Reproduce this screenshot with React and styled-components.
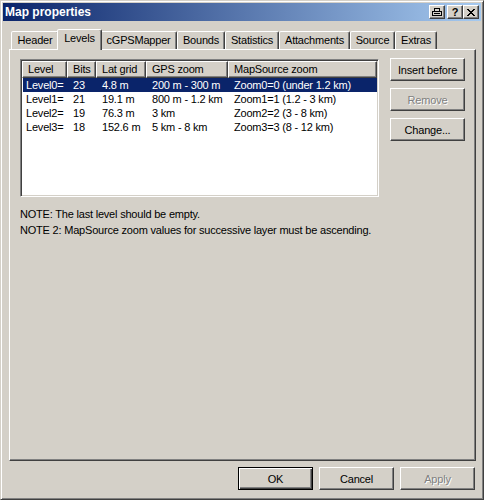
import React from "react";
import styled, { createGlobalStyle, css } from "styled-components";

const GlobalStyle = createGlobalStyle`
  html, body {
    margin: 0;
    padding: 0;
    background: #d4d0c8;
  }
  * {
    box-sizing: border-box;
  }
`;

const raised = css`
  border: 1px solid;
  border-color: #ffffff #404040 #404040 #ffffff;
  box-shadow: inset -1px -1px #808080;
`;

const Window = styled.div`
  width: 484px;
  height: 500px;
  background: #d4d0c8;
  border: 1px solid;
  border-color: #d4d0c8 #404040 #404040 #d4d0c8;
  box-shadow: inset 1px 1px #ffffff, inset -1px -1px #808080;
  padding: 2px;
  display: flex;
  flex-direction: column;
  font-family: "Liberation Sans", Arial, sans-serif;
  font-size: 11px;
  letter-spacing: -0.2px;
  color: #000;
`;

const TitleBar = styled.div`
  height: 18px;
  flex: none;
  display: flex;
  align-items: center;
  padding: 0 2px;
  background: linear-gradient(to right, #0a246a, #a6caf0);
`;

const Title = styled.div`
  flex: 1;
  color: #fff;
  font-weight: bold;
  font-size: 12px;
  letter-spacing: 0;
  white-space: nowrap;
`;

const CaptionButtons = styled.div`
  display: flex;
  gap: 2px;
`;

const CaptionGroup = styled.div`
  display: flex;
`;

const CaptionButton = styled.div`
  width: 16px;
  height: 14px;
  background: #d4d0c8;
  ${raised};
  display: flex;
  align-items: center;
  justify-content: center;
  font-weight: bold;
  font-size: 11px;
  line-height: 12px;
  letter-spacing: 0;
`;

const Body = styled.div`
  flex: 1;
  display: flex;
  flex-direction: column;
  padding: 8px 5px 7px 6px;
`;

const TabStrip = styled.div`
  height: 20px;
  display: flex;
  align-items: flex-end;
  padding-left: 2px;
  position: relative;
  z-index: 2;
`;

const Tab = styled.div`
  width: ${(p) => p.$w}px;
  height: 18px;
  flex: none;
  border: 1px solid;
  border-bottom: none;
  border-color: #ffffff #404040 transparent #ffffff;
  border-radius: 2px 2px 0 0;
  box-shadow: inset -1px 0 #808080;
  background: #d4d0c8;
  text-align: center;
  padding-top: 2px;
  line-height: 13px;
  white-space: nowrap;
  ${(p) =>
    p.$active &&
    css`
      height: 21px;
      margin: 0 -2px -1px;
      width: ${p.$w + 4}px;
      position: relative;
      z-index: 3;
    `}
`;

const Panel = styled.div`
  flex: 1;
  ${raised};
  padding: 8px 10px 0 10px;
  display: flex;
  flex-direction: column;
`;

const TopRow = styled.div`
  display: flex;
  gap: 11px;
  align-items: flex-start;
`;

const ListView = styled.div`
  width: 359px;
  height: 138px;
  margin-top: 1px;
  background: #fff;
  border: 1px solid;
  border-color: #808080 #ffffff #ffffff #808080;
  box-shadow: inset 1px 1px #404040, inset -1px -1px #d4d0c8;
  padding: 1px;
  display: flex;
  flex-direction: column;
`;

const cols = "45px 29px 50px 82px 149px";

const HeaderRow = styled.div`
  display: grid;
  grid-template-columns: ${cols};
  height: 17px;
  flex: none;
`;

const HeaderCell = styled.div`
  background: #d4d0c8;
  ${raised};
  padding-left: 5px;
  line-height: 15px;
  white-space: nowrap;
  overflow: hidden;
`;

const Row = styled.div`
  display: grid;
  grid-template-columns: ${cols};
  height: 14px;
  line-height: 14px;
  ${(p) =>
    p.$selected &&
    css`
      background: #0a246a;
      color: #fff;
      box-shadow: inset 1px 0 #fff;
    `}
`;

const Cell = styled.div`
  padding-left: ${(p) => (p.$first ? 4 : 6)}px;
  white-space: nowrap;
  overflow: hidden;
`;

const ButtonColumn = styled.div`
  display: flex;
  flex-direction: column;
  gap: 7px;
`;

const Button = styled.div`
  width: 75px;
  height: 23px;
  background: #d4d0c8;
  display: flex;
  align-items: center;
  justify-content: center;
  white-space: nowrap;
  ${(p) =>
    p.$default
      ? css`
          border: 1px solid #000;
          box-shadow: inset 1px 1px #fff, inset -1px -1px #404040,
            inset -2px -2px #808080;
        `
      : raised}
  ${(p) =>
    p.$disabled &&
    css`
      color: #808080;
      text-shadow: 1px 1px #fff;
    `}
`;

const Notes = styled.div`
  margin-top: 9px;
  line-height: 16px;
`;

const ButtonRow = styled.div`
  display: flex;
  justify-content: flex-end;
  gap: 6px;
  margin-top: 6px;
  padding-right: 1px;
`;

const PrintIcon = () => (
  <svg width="10" height="8" viewBox="0 0 10 8" shapeRendering="crispEdges">
    <path d="M2 0h6v1H2zM2 0h1v3H2zM7 0h1v3H7z" fill="#000" />
    <path d="M0 3h10v1H0zM0 3h1v5H0zM9 3h1v5H9zM0 7h10v1H0zM2 5h6v1H2z" fill="#000" />
  </svg>
);

const CloseIcon = () => (
  <svg width="8" height="7" viewBox="0 0 8 7" shapeRendering="crispEdges">
    <path
      d="M0 0h2v1H0zM6 0h2v1H6zM1 1h2v1H1zM5 1h2v1H5zM2 2h4v1H2zM3 3h2v1H3zM2 4h4v1H2zM1 5h2v1H1zM5 5h2v1H5zM0 6h2v1H0zM6 6h2v1H6z"
      fill="#000"
    />
  </svg>
);

const tabs = [
  { label: "Header", w: 48 },
  { label: "Levels", w: 41, active: true },
  { label: "cGPSMapper", w: 77 },
  { label: "Bounds", w: 48 },
  { label: "Statistics", w: 54 },
  { label: "Attachments", w: 71 },
  { label: "Source", w: 45 },
  { label: "Extras", w: 42 },
];

const headers = ["Level", "Bits", "Lat grid", "GPS zoom", "MapSource zoom"];

const levels = [
  ["Level0=", "23", "4.8 m", "200 m - 300 m", "Zoom0=0 (under 1.2 km)"],
  ["Level1=", "21", "19.1 m", "800 m - 1.2 km", "Zoom1=1 (1.2 - 3 km)"],
  ["Level2=", "19", "76.3 m", "3 km", "Zoom2=2 (3 - 8 km)"],
  ["Level3=", "18", "152.6 m", "5 km - 8 km", "Zoom3=3 (8 - 12 km)"],
];

export default function App() {
  return (
    <>
      <GlobalStyle />
      <Window>
        <TitleBar>
          <Title>Map properties</Title>
          <CaptionButtons>
            <CaptionButton>
              <PrintIcon />
            </CaptionButton>
            <CaptionGroup>
              <CaptionButton>?</CaptionButton>
              <CaptionButton>
                <CloseIcon />
              </CaptionButton>
            </CaptionGroup>
          </CaptionButtons>
        </TitleBar>
        <Body>
          <TabStrip>
            {tabs.map((t) => (
              <Tab key={t.label} $w={t.w} $active={t.active}>
                {t.label}
              </Tab>
            ))}
          </TabStrip>
          <Panel>
            <TopRow>
              <ListView>
                <HeaderRow>
                  {headers.map((h) => (
                    <HeaderCell key={h}>{h}</HeaderCell>
                  ))}
                </HeaderRow>
                {levels.map((row, i) => (
                  <Row key={row[0]} $selected={i === 0}>
                    {row.map((c, j) => (
                      <Cell key={j} $first={j === 0}>
                        {c}
                      </Cell>
                    ))}
                  </Row>
                ))}
              </ListView>
              <ButtonColumn>
                <Button>Insert before</Button>
                <Button $disabled>Remove</Button>
                <Button>Change...</Button>
              </ButtonColumn>
            </TopRow>
            <Notes>
              <div>NOTE: The last level should be empty.</div>
              <div>NOTE 2: MapSource zoom values for successive layer must be ascending.</div>
            </Notes>
          </Panel>
          <ButtonRow>
            <Button $default>OK</Button>
            <Button>Cancel</Button>
            <Button $disabled>Apply</Button>
          </ButtonRow>
        </Body>
      </Window>
    </>
  );
}
